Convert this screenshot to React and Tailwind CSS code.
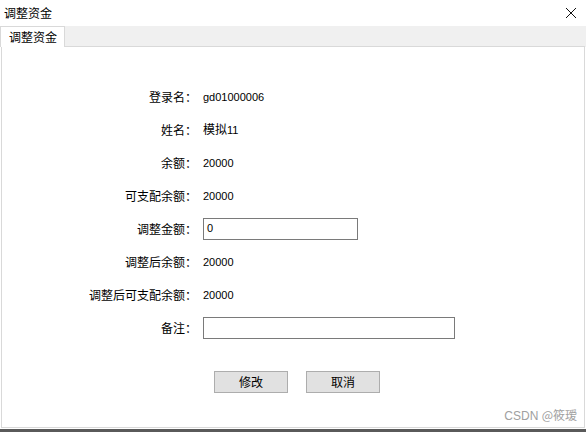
import React from "react";

const cjk = { fontFamily: '"Noto Sans CJK SC", "Microsoft YaHei", sans-serif' };
const num = { fontFamily: '"Liberation Sans", Tahoma, sans-serif' };

const rows = [
  { label: "登录名：", value: "gd01000006" },
  { label: "姓名：", value: "模拟11" },
  { label: "余额：", value: "20000" },
  { label: "可支配余额：", value: "20000" },
  { label: "调整金额：", input: "0", width: "w-[155px]" },
  { label: "调整后余额：", value: "20000" },
  { label: "调整后可支配余额：", value: "20000" },
  { label: "备注：", input: "", width: "w-[252px]" },
];

const Value = ({ text }) => {
  // split CJK from digits so the digits get the latin font
  const m = text.match(/^([^\x00-\x7f]*)(.*)$/);
  return (
    <span className="text-[12px] text-black">
      {m[1] && <span style={cjk}>{m[1]}</span>}
      <span style={num} className="text-[11px]">{m[2]}</span>
    </span>
  );
};

export default function App() {
  return (
    <div className="w-[586px] h-[432px] bg-white flex flex-col overflow-hidden border-b-[3px] border-[#5a5a5a]" style={cjk}>
      {/* title bar */}
      <div className="h-[26px] flex items-center justify-between pl-[4px] pr-[8px] shrink-0">
        <span className="text-[12px] text-black leading-none">调整资金</span>
        <svg width="12" height="12" viewBox="0 0 12 12" className="mr-[1px]">
          <path d="M1 1L11 11M11 1L1 11" stroke="#111" strokeWidth="1" />
        </svg>
      </div>

      {/* tab strip */}
      <div className="h-[21px] bg-[#f0f0f0] flex shrink-0">
        <div className="w-[65px] h-[21px] bg-white border-t border-l border-r border-[#d9d9d9] flex items-center pl-[8px]">
          <span className="text-[12px] text-black leading-none">调整资金</span>
        </div>
        <div className="flex-1 border-b border-[#d9d9d9] mr-[1px]" />
      </div>

      {/* content */}
      <div className="flex-1 flex flex-col border-l border-r border-b border-[#d9d9d9] mx-[1px] mb-[1px] pt-[33px]">
        <div className="grid grid-cols-[195px_1fr] gap-x-[6px]">
          {rows.map((r) => (
            <React.Fragment key={r.label}>
              <div className="h-[33px] flex items-center justify-end text-[12px] text-black">
                {r.label}
              </div>
              <div className="h-[33px] flex items-center">
                {r.input !== undefined ? (
                  <div className={`${r.width} h-[22px] border border-[#7a7a7a] flex items-center px-[3px] text-[11px] text-black`} style={num}>
                    {r.input}
                  </div>
                ) : (
                  <Value text={r.value} />
                )}
              </div>
            </React.Fragment>
          ))}
        </div>

        <div className="flex gap-[18px] pl-[212px] mt-[27px]">
          <button className="w-[74px] h-[22px] bg-[#e1e1e1] border border-[#adadad] text-[12px] text-black flex items-center justify-center">修改</button>
          <button className="w-[74px] h-[22px] bg-[#e1e1e1] border border-[#adadad] text-[12px] text-black flex items-center justify-center">取消</button>
        </div>

        <div className="flex-1" />
        <div className="flex justify-end pr-[7px] pb-[2px]">
          <span className="text-[12px] text-[#a0a0a0]">
            <span style={num}>CSDN </span>@筱瑷
          </span>
        </div>
      </div>
    </div>
  );
}
